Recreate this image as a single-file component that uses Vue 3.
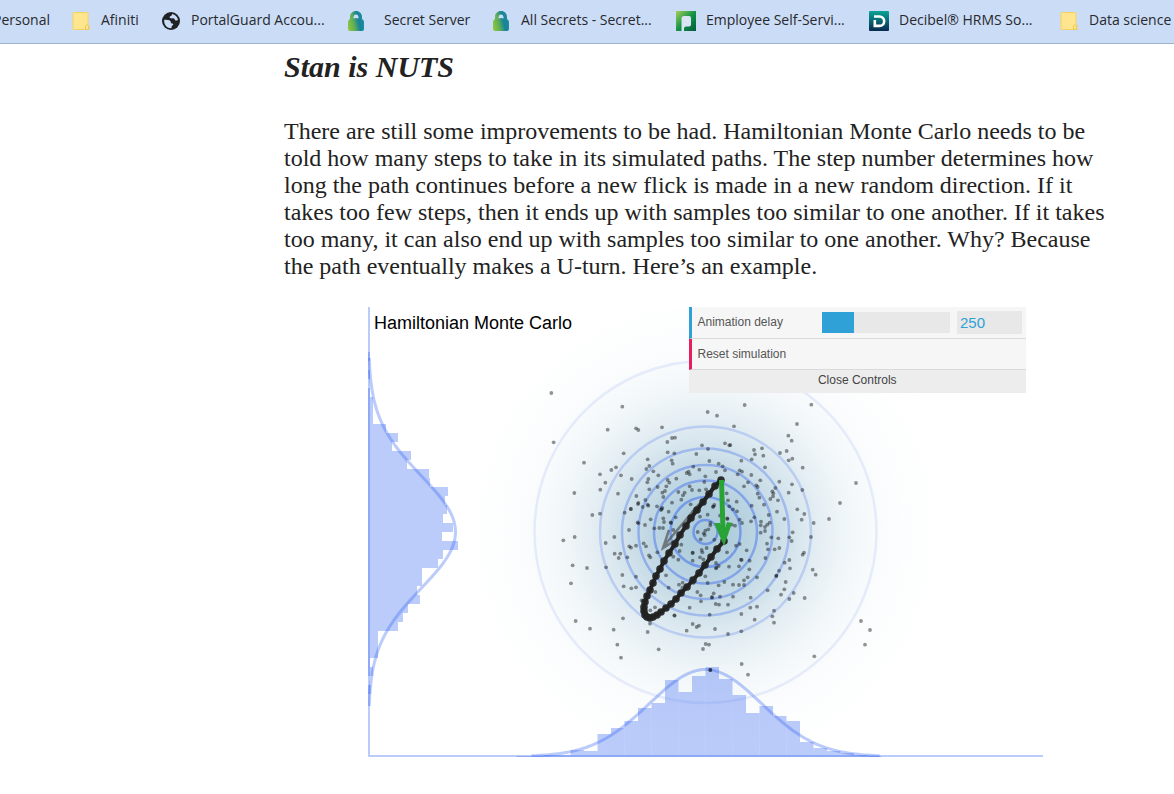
<script setup>
import { computed, ref } from 'vue'

const bookmarks = [
  { icon: '', label: 'Personal' },
  { icon: 'folder', label: 'Afiniti' },
  { icon: 'globe', label: 'PortalGuard Accou...' },
  { icon: 'lock', label: 'Secret Server', indent: true },
  { icon: 'lock', label: 'All Secrets - Secret...' },
  { icon: 'portal', label: 'Employee Self-Servi...' },
  { icon: 'decibel', label: 'Decibel® HRMS So...' },
  { icon: 'folder', label: 'Data science' },
]

const lines = [
  'There are still some improvements to be had. Hamiltonian Monte Carlo needs to be',
  'told how many steps to take in its simulated paths. The step number determines how',
  'long the path continues before a new flick is made in a new random direction. If it',
  'takes too few steps, then it ends up with samples too similar to one another. If it takes',
  'too many, it can also end up with samples too similar to one another. Why? Because',
  'the path eventually makes a U-turn. Here’s an example.',
]

const delay = ref(250)
const sliderFill = computed(() => ({ '--fill': delay.value / 10 + '%' }))
const open = ref(true)

const W = 675
const H = 450
const CX = W / 2
const CY = H / 2

const contours = [
  { r: 171, o: 0.1 },
  { r: 105.5, o: 0.22 },
  { r: 83.5, o: 0.32 },
  { r: 67, o: 0.38 },
  { r: 51.5, o: 0.44 },
  { r: 35, o: 0.5 },
  { r: 12, o: 0.5 },
]

const glow = Array.from({ length: 21 }, (_, i) => {
  const r = (i / 20) * 270
  return { at: i / 20, o: i === 20 ? 0 : 0.42 * Math.exp((-r * r) / (2 * 76 * 76)) }
})

// The curves stop where the density is too small to leave the axis.
const REACH = 174
const density = (d) => 87 * Math.exp((-d * d) / (2 * 56.25 * 56.25))
const offsets = Array.from({ length: 117 }, (_, i) => i * 3 - REACH)
const bottomCurve = 'M' + offsets.map((d) => `${CX + d} ${(H - 0.5 - density(d)).toFixed(2)}`).join('L')
const sideCurve = 'M' + offsets.map((d) => `${(0.5 + density(d)).toFixed(2)} ${CY + d}`).join('L')

const sideStart = 5
const sideBars = [2, 0, 2, 0, 2, 5, 5, 5, 18, 30, 24, 43, 39, 61, 62, 80, 77, 79, 75, 85, 74, 90, 75, 70, 54, 54, 49, 52, 40, 35, 30, 10, 10, 10, 2, 5, 0, 3]
const bottomStart = 11
const bottomBars = [1, 1, 2, 2, 7, 6, 23, 29, 36, 49, 54, 77, 65, 81, 90, 78, 62, 44, 51, 41, 36, 15, 9, 6, 4, 2, 1]

// Sample positions, grouped in tiles; each tile is in thirds of a canvas unit.
const tiles = [
  { x: 222, y: 93, pts: '97,20 353,36 53,89 138,85 145,90 216,82 246,114 255,113 232,126 336,136 354,147 101,160 233,157 253,160 319,162 245,181 248,191 173,178 178,198 169,207 190,214 205,226 64,210 78,202 30,223 93,226 125,237 46,248 31,269 84,281 139,288 175,237 172,247 178,268 166,300 145,309 144,312 158,321 173,314 175,317 122,327 123,327 104,338 30,341 7,345 143,367 145,370 165,375 182,358 310,200 328,209 346,229 290,219 296,215 299,223 259,236 233,240 238,248 229,259 203,261 225,273 217,278 220,291 265,276 284,278 279,286 274,299 299,259 306,270 328,271 343,246 348,268 246,308 201,319 217,324 213,330 215,327 236,335 220,355 222,366 242,367 243,369 257,352 302,313 310,335 330,350 353,344 117,390 193,385 208,384 219,384 358,183' },
  { x: 332, y: 93, pts: '134,15 334,14 23,36 51,47 291,72 102,79 265,107 275,122 6,136 24,147 75,130 88,136 91,135 162,150 165,163 186,145 190,167 155,178 124,182 195,202 240,159 260,153 277,176 266,181 308,203 29,183 56,191 68,199 48,216 75,211 119,211 126,215 113,223 16,229 14,244 154,225 144,247 181,241 132,259 169,256 173,261 173,281 178,293 217,274 220,280 219,289 211,297 192,314 226,264 238,245 276,253 266,278 307,270 234,301 292,328 313,342 305,359 341,369 231,335 253,357 206,345 209,368 183,365 182,376 202,374 195,381 163,352 153,364 155,317 110,305 80,280 84,301 88,319 99,328 111,334 82,355 82,357 119,359 126,369 95,374 105,377 39,321 40,319 43,315 22,344 60,347 31,369 31,376 25,388 18,266 36,268 5,348' },
  { x: 222, y: 213, pts: '117,31 73,51 47,69 208,23 219,23 190,28 250,30 118,79 123,83 138,77 161,70 168,79 74,101 91,101 86,114 112,112 48,142 177,106 181,112 97,165 138,170 101,199 124,205 138,202 228,166 236,203 155,241 196,216 195,262 181,271 99,295 71,329 82,374 0,326 173,336 180,311 253,286 254,287 308,312 290,332 320,321 327,317 299,263 322,216 267,194 278,188 277,203 310,189 308,98 308,99 308,122 265,119 250,110 274,74 269,93 323,36 206,388 202,97' },
  { x: 332, y: 213, pts: '16,32 11,40 14,45 25,33 196,20 195,33 182,38 214,52 235,55 268,52 275,63 278,37 333,51 341,8 201,71 204,88 224,88 238,84 312,98 308,104 140,91 108,77 119,72 75,63 81,97 43,59 5,90 7,97 10,118 2,58 20,84 0,112 117,139 123,119 125,120 149,122 148,148 196,114 268,120 254,128 270,145 237,152 229,167 229,168 338,149 347,164 257,186 253,208 243,224 281,219 268,237 314,234 203,211 171,172 143,172 132,181 132,195 117,195 99,194 73,186 56,196 23,189 16,169 48,129 56,138 48,145 49,143 87,140 41,220 36,231 36,233 60,230 99,230 152,233 47,252 57,254 84,254 2,226 3,244 29,284 124,282 151,263 171,260 222,272 217,289 222,308 164,299 124,334 84,342 45,327 0,317 17,372 27,374 9,387' },
  { x: -8, y: -7, pts: '574,279 581,427 672,488 643,579 697,645 644,711 610,721 638,796 681,804 633,850 647,963 688,987' },
  { x: 192, y: 333, pts: '173,14 183,53 296,29 545,72 564,104 763,49 915,14 451,90 451,90' },
  { x: 0, y: 0, pts: '1464,528 1416,588 1383,636 1479,942 1506,969' },
]

// A sample on the seam of two tiles is listed in both: keep the first one only.
const samples = tiles
  .flatMap((t, tile) =>
    t.pts.split(' ').map((p) => {
      const [x, y] = p.split(',').map(Number)
      return { tile, x: t.x + x / 3, y: t.y + y / 3 }
    })
  )
  .filter((s, i, all) => !all.slice(0, i).some((o) => o.tile !== s.tile && Math.hypot(o.x - s.x, o.y - s.y) < 2))

const steps = [[353, 173], [347, 179], [341, 187], [335, 195], [329, 203], [323, 211], [318, 219], [312, 228], [307, 237], [301, 246], [296, 254], [292, 262], [288, 269], [285, 276], [282, 283], [279, 289], [277, 295], [276, 300], [276, 304], [277, 308], [279, 310], [282, 311], [285, 310], [289, 308], [293, 305], [298, 301], [303, 297], [308, 292], [313, 286], [319, 280], [325, 273], [331, 266], [337, 258], [343, 250], [349, 242], [356, 234]]
const path = steps.map((s) => s.join(',')).join(' ')
</script>

<template>
  <div class="page">
    <nav class="bookmarks" aria-label="Bookmarks">
      <a v-for="(b, i) in bookmarks" :key="i" href="#" class="bookmark" :class="{ first: !b.icon, indent: b.indent }">
        <svg v-if="b.icon === 'folder'" class="icon" viewBox="0 0 20 20" aria-hidden="true">
          <path d="M3 1.500h13a1 1 0 0 1 1 1v11l1 1v4H3a1 1 0 0 1-1-1v-15a1 1 0 0 1 1-1z" fill="#ffe58d" stroke="#f6d264" stroke-width="1" />
          <path d="M14.500 18.500v-3.500l1.500-1.500 1.500 1.500v3.500z" fill="#ffe58d" stroke="#eec750" stroke-width="1" />
        </svg>
        <svg v-else-if="b.icon === 'globe'" class="icon" viewBox="0 0 20 20" aria-hidden="true">
          <circle cx="10" cy="10" r="9" fill="#202124" />
          <path d="M11.200 3.100c3 .5 5.200 2.800 5.800 5.700-.8.900-1.600 1-2.500.6-.9-.5-.7-1.900-1.700-2-1.500-.2-2.900.4-3.900-.6C8.100 6 8.800 5.300 10 5.100c.9-.2.400-1.300 1.200-2z" fill="#cbdcf6" />
          <path d="M3.200 8.800c2.200.1 5.200-.2 6.300 1.400.6.900-.1 1.500.8 2 .8.400 2 .1 2 1.300 0 .9-1.200.8-1.500 1.600-.3.700.1 1.500-.6 2.200C6.300 17.400 2.700 14.200 3.200 8.800z" fill="#cbdcf6" />
        </svg>
        <svg v-else-if="b.icon === 'lock'" class="icon" viewBox="0 0 20 20" aria-hidden="true">
          <defs>
            <linearGradient :id="'lock' + i" x1="0" y1="0.7" x2="1" y2="0.4">
              <stop offset="0" stop-color="#8bc53f" />
              <stop offset="0.35" stop-color="#5fae55" />
              <stop offset="0.65" stop-color="#15839a" />
              <stop offset="1" stop-color="#218c9c" />
            </linearGradient>
          </defs>
          <path fill-rule="evenodd" d="M4 8V6C4 2.500 6.500 0 10 0s6 2.500 6 6v2q2 1 2 3v7q0 2-2 2H4q-2 0-2-2v-7q0-2 2-3zM7.500 7.500q2.500-1 5 0V6.200C12.500 4.700 11.500 3.500 10 3.500S7.500 4.700 7.500 6.200z" :fill="`url(#lock${i})`" />
        </svg>
        <svg v-else-if="b.icon === 'portal'" class="icon" viewBox="0 0 20 20" aria-hidden="true">
          <defs>
            <linearGradient id="portal" x1="0" y1="0" x2="1" y2="1">
              <stop offset="0" stop-color="#a5cf5a" />
              <stop offset="0.5" stop-color="#159447" />
              <stop offset="1" stop-color="#005b3b" />
            </linearGradient>
          </defs>
          <path fill="url(#portal)" d="M0 0h20v20H0z" />
          <path fill="#d9e5f6" d="M5.500 20V7.500Q5.500 5 8 5h5q2 0 2 2v6.500q0 2-2 2h-3q-2 0-2 2V20z" />
        </svg>
        <svg v-else-if="b.icon === 'decibel'" class="icon" viewBox="0 0 20 20" aria-hidden="true">
          <defs>
            <linearGradient id="decibel" x1="0" y1="0" x2="0" y2="1">
              <stop offset="0" stop-color="#08a596" />
              <stop offset="1" stop-color="#08284f" />
            </linearGradient>
          </defs>
          <rect width="20" height="20" rx="1" fill="url(#decibel)" />
          <path d="M5 5.500h5.500a4.700 4.700 0 0 1 0 9.400H5.800V9" fill="none" stroke="#fff" stroke-width="2.600" />
        </svg>
        <span class="label">{{ b.label }}</span>
      </a>
    </nav>

    <main class="article">
      <h2 class="heading">Stan is NUTS</h2>
      <p class="prose"><span v-for="l in lines" :key="l" class="line">{{ l }}</span></p>

      <figure class="demo">
        <svg class="chart" :viewBox="`0 0 ${W} ${H}`" role="img" aria-label="Hamiltonian Monte Carlo">
          <defs>
            <radialGradient id="glow" gradientUnits="userSpaceOnUse" :cx="CX" :cy="CY" r="270">
              <stop v-for="g in glow" :key="g.at" :offset="g.at" stop-color="#3b83a9" :stop-opacity="g.o" />
            </radialGradient>
          </defs>
          <rect :width="W" :height="H" fill="url(#glow)" />
          <g fill="none" stroke="#3766f0" stroke-width="2.5">
            <circle v-for="c in contours" :key="c.r" :cx="CX" :cy="CY" :r="c.r" :stroke-opacity="c.o" />
          </g>

          <g class="tint">
            <rect v-for="(w, i) in sideBars" :key="i" x="0" :y="(sideStart + i) * 9" :width="w" height="9" shape-rendering="crispEdges" />
          </g>
          <g class="tint">
            <rect v-for="(h, i) in bottomBars" :key="i" :x="(bottomStart + i) * 13.5" :y="H - h" width="13.5" :height="h" />
          </g>
          <rect class="tint" x="0" y="0" width="2" :height="H" />
          <rect class="tint" x="2" :y="H - 2" :width="W - 2" height="2" />
          <path class="curve" :d="bottomCurve" />
          <path class="curve" :d="sideCurve" />

          <g fill="#000" fill-opacity="0.42">
            <circle v-for="(s, i) in samples" :key="i" :cx="s.x" :cy="s.y" r="1.9" />
          </g>

          <path d="M332 196L295 240M301 223l-6 18 16-10" fill="none" stroke="#555b5e" stroke-opacity="0.75" stroke-width="2.500" />
          <polyline :points="path" fill="none" stroke="#222" stroke-width="4" />
          <g fill="#222" fill-opacity="0.93">
            <circle v-for="(s, i) in steps" :key="i" :cx="s[0]" :cy="s[1]" r="3.8" />
          </g>
          <path d="M353.500 173L355 224" stroke="#2aa336" stroke-width="5" />
          <path d="M346 216l6 0 2 5h3l2-6 5 1-8 23z" fill="#2aa336" />
          <text x="6" y="22" class="title">Hamiltonian Monte Carlo</text>
        </svg>

        <form class="controls" @submit.prevent>
          <template v-if="open">
            <div class="row number">
              <label for="delay">Animation delay</label>
              <input id="delay" v-model.number="delay" class="slider" type="range" min="0" max="1000" :style="sliderFill" />
              <input v-model.number="delay" class="value" type="text" aria-label="Animation delay value" />
            </div>
            <button class="row action" type="button" @click="delay = 250">Reset simulation</button>
          </template>
          <button class="close" type="button" @click="open = !open">{{ open ? 'Close Controls' : 'Open Controls' }}</button>
        </form>
      </figure>
    </main>
  </div>
</template>

<style>
body {
  margin: 0;
  background: #fff;
}
</style>

<style scoped>
.page {
  overflow: hidden;
}
.bookmarks {
  display: grid;
  grid-template-columns: 71px 90px 185px 145px 185px 193px 190px auto;
  align-items: center;
  box-sizing: border-box;
  height: 44px;
  padding-bottom: 1px;
  background: #cbdcf6;
  border-bottom: 1px solid #9db3c9;
  overflow: hidden;
}
.bookmark {
  display: flex;
  align-items: center;
  gap: 10px;
  min-width: 0;
  color: #27292d;
  font: 14px/20px "Open Sans", "Noto Sans", sans-serif;
  text-decoration: none;
  white-space: nowrap;
}
.bookmark.first {
  justify-content: flex-end;
  padding-right: 21px;
}
.bookmark.indent {
  gap: 18px;
}
.label {
  padding-bottom: 2px;
}
.icon {
  flex: none;
  width: 20px;
  height: 20px;
}
.article {
  padding: 0 47px 0 284px;
  color: #222;
  font-family: "Liberation Serif", serif;
}
.heading {
  margin: 4px 0 32px;
  font-size: 30px;
  line-height: 38px;
  font-style: italic;
  font-weight: 700;
}
.prose {
  margin: 0 0 27px;
  font-size: 24px;
  line-height: 27px;
}
.line {
  display: block;
  white-space: nowrap;
}
.demo {
  position: relative;
  max-width: 675px;
  margin: 0 auto;
}
.chart {
  display: block;
  width: 100%;
}
.tint {
  fill: #3766f0;
  fill-opacity: 0.34;
}
.curve {
  fill: none;
  stroke: #3766f0;
  stroke-opacity: 0.34;
  stroke-width: 3;
}
.title {
  font: 18px "Liberation Sans", sans-serif;
  fill: #000;
}
.controls {
  position: absolute;
  top: 0;
  right: 17px;
  width: 50%;
  color: #555;
  font: 12px/16px "Liberation Sans", sans-serif;
}
.row {
  display: flex;
  align-items: center;
  box-sizing: border-box;
  width: 100%;
  padding: 0 4px 0 6px;
  background: #f6f6f6;
  border: 0;
  border-bottom: 1px solid #dadada;
  border-left: 3px solid #2fa1d6;
}
.number {
  height: 32px;
}
.number label {
  flex: 1;
  padding-bottom: 2px;
}
.slider {
  appearance: none;
  width: 128px;
  height: 21px;
  margin: 0 7px 0 0;
  background: linear-gradient(to right, #2fa1d6 var(--fill), #e8e8e8 var(--fill));
}
.slider::-webkit-slider-thumb {
  appearance: none;
  width: 0;
  height: 21px;
}
.value {
  box-sizing: border-box;
  width: 65px;
  height: 23px;
  padding: 0 3px;
  border: 0;
  background: #e8e8e8;
  color: #2fa1d6;
  font: 15px/23px "Liberation Sans", sans-serif;
}
.action {
  height: 31px;
  border-left-color: #e61d5f;
  color: inherit;
  font: inherit;
}
.close {
  display: block;
  width: 100%;
  height: 23px;
  padding: 0 0 3px;
  border: 0;
  background: #ededed;
  color: #444;
  font: inherit;
}
</style>
